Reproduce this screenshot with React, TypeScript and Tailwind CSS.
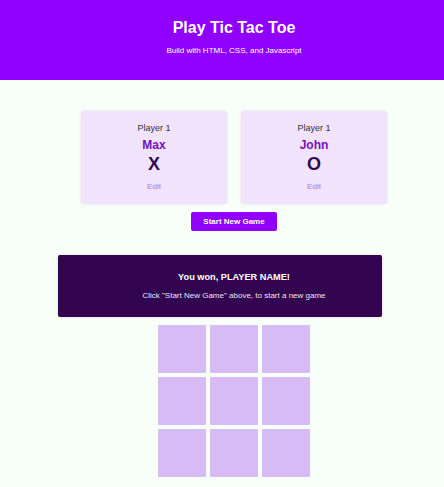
const players = [
  { name: "Max", symbol: "X" },
  { name: "John", symbol: "O" },
];

const App = () => {
  return (
    <div className="min-h-[487px] bg-[#f8fff8] font-['Liberation_Sans',Arial,sans-serif]">
      <header className="h-[80px] bg-[#8f00ff] pl-6 pt-[18px] flex flex-col items-center gap-[8px] text-white">
        <h1 className="text-[16px] leading-[20px] font-bold">Play Tic Tac Toe</h1>
        <p className="text-[8px] leading-[10px]">Build with HTML, CSS, and Javascript</p>
      </header>
      <main className="pl-6 pt-[31px] pb-[10px] flex flex-col">
        <div className="flex justify-center gap-[14px]">
          {players.map((p) => (
            <div
              key={p.name}
              className="w-[146px] h-[93px] bg-[#f2e3fd] rounded-[3px] shadow-[0_0_3px_rgba(0,0,0,0.12)] pt-[11px] flex flex-col items-center"
            >
              <span className="text-[9px] leading-[12px] text-[#333]">Player 1</span>
              <span className="mt-[3px] text-[12px] leading-[16px] font-bold text-[#7410b8]">{p.name}</span>
              <span className="text-[18px] leading-[22px] font-bold text-[#2c0a4e]">{p.symbol}</span>
              <span className="mt-[7px] text-[8px] leading-[10px] text-[#a872f0]">Edit</span>
            </div>
          ))}
        </div>
        <div className="flex justify-center mt-[8px]">
          <button className="w-[86px] h-[19px] bg-[#9000ff] rounded-[2px] text-white text-[8px] font-bold">
            Start New Game
          </button>
        </div>
        <div className="ml-[34px] mt-[24px] w-[324px] h-[62px] bg-[#330550] rounded-[2px] shadow-[0_0_3px_rgba(0,0,0,0.15)] pt-[16px] pl-[28px] flex flex-col items-center gap-[8px]">
          <h2 className="text-[9.2px] leading-[12px] font-bold text-white">You won, PLAYER NAME!</h2>
          <p className="text-[8px] leading-[10px] text-[#ece4f5]">
            Click "Start New Game" above, to start a new game
          </p>
        </div>
        <div className="mt-[8px] mx-auto grid grid-cols-[repeat(3,48px)] gap-[4px]">
          {Array.from({ length: 9 }).map((_, i) => (
            <div key={i} className="w-[48px] h-[48px] bg-[#d7bbf5] rounded-[1px]" />
          ))}
        </div>
      </main>
    </div>
  );
};

export default App;
